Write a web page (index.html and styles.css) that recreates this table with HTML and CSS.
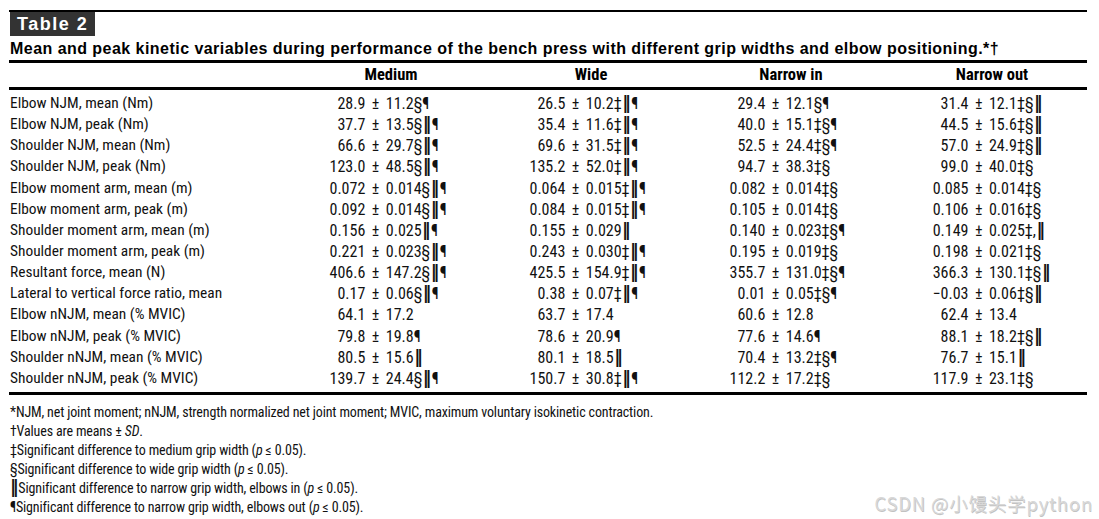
FILE: index.html
```html
<!DOCTYPE html>
<html lang="en">
<head>
<meta charset="utf-8">
<title>Table 2</title>
<link rel="stylesheet" href="styles.css">
</head>
<body>
<div class="page">
  <div class="top-rule"></div>
  <div class="tag-row"><span class="tag">Table 2</span></div>
  <div class="title">Mean and peak kinetic variables during performance of the bench press with different grip widths and elbow positioning.*†</div>
  <div class="table">
    <div class="row head">
      <div></div><div>Medium</div><div>Wide</div><div>Narrow in</div><div class="h4">Narrow out</div>
    </div>
    <div class="body">
      <div class="row"><div class="lbl">Elbow NJM, mean (Nm)</div><div><span class="m">28.9</span> ± 11.2§¶</div><div><span class="m">26.5</span> ± 10.2‡<span class="db">‖</span>¶</div><div><span class="m">29.4</span> ± 12.1§¶</div><div class="c4"><span class="m">31.4</span> ± 12.1‡§<span class="db">‖</span></div></div>
      <div class="row"><div class="lbl">Elbow NJM, peak (Nm)</div><div><span class="m">37.7</span> ± 13.5§<span class="db">‖</span>¶</div><div><span class="m">35.4</span> ± 11.6‡<span class="db">‖</span>¶</div><div><span class="m">40.0</span> ± 15.1‡§¶</div><div class="c4"><span class="m">44.5</span> ± 15.6‡§<span class="db">‖</span></div></div>
      <div class="row"><div class="lbl">Shoulder NJM, mean (Nm)</div><div><span class="m">66.6</span> ± 29.7§<span class="db">‖</span>¶</div><div><span class="m">69.6</span> ± 31.5‡<span class="db">‖</span>¶</div><div><span class="m">52.5</span> ± 24.4‡§¶</div><div class="c4"><span class="m">57.0</span> ± 24.9‡§<span class="db">‖</span></div></div>
      <div class="row"><div class="lbl">Shoulder NJM, peak (Nm)</div><div><span class="m">123.0</span> ± 48.5§<span class="db">‖</span>¶</div><div><span class="m">135.2</span> ± 52.0‡<span class="db">‖</span>¶</div><div><span class="m">94.7</span> ± 38.3‡§</div><div class="c4"><span class="m">99.0</span> ± 40.0‡§</div></div>
      <div class="row"><div class="lbl">Elbow moment arm, mean (m)</div><div><span class="m">0.072</span> ± 0.014§<span class="db">‖</span>¶</div><div><span class="m">0.064</span> ± 0.015‡<span class="db">‖</span>¶</div><div><span class="m">0.082</span> ± 0.014‡§</div><div class="c4"><span class="m">0.085</span> ± 0.014‡§</div></div>
      <div class="row"><div class="lbl">Elbow moment arm, peak (m)</div><div><span class="m">0.092</span> ± 0.014§<span class="db">‖</span>¶</div><div><span class="m">0.084</span> ± 0.015‡<span class="db">‖</span>¶</div><div><span class="m">0.105</span> ± 0.014‡§</div><div class="c4"><span class="m">0.106</span> ± 0.016‡§</div></div>
      <div class="row"><div class="lbl">Shoulder moment arm, mean (m)</div><div><span class="m">0.156</span> ± 0.025<span class="db">‖</span>¶</div><div><span class="m">0.155</span> ± 0.029<span class="db">‖</span></div><div><span class="m">0.140</span> ± 0.023‡§¶</div><div class="c4"><span class="m">0.149</span> ± 0.025‡,<span class="db">‖</span></div></div>
      <div class="row"><div class="lbl">Shoulder moment arm, peak (m)</div><div><span class="m">0.221</span> ± 0.023§<span class="db">‖</span>¶</div><div><span class="m">0.243</span> ± 0.030‡<span class="db">‖</span>¶</div><div><span class="m">0.195</span> ± 0.019‡§</div><div class="c4"><span class="m">0.198</span> ± 0.021‡§</div></div>
      <div class="row"><div class="lbl">Resultant force, mean (N)</div><div><span class="m">406.6</span> ± 147.2§<span class="db">‖</span>¶</div><div><span class="m">425.5</span> ± 154.9‡<span class="db">‖</span>¶</div><div><span class="m">355.7</span> ± 131.0‡§¶</div><div class="c4"><span class="m">366.3</span> ± 130.1‡§<span class="db">‖</span></div></div>
      <div class="row"><div class="lbl">Lateral to vertical force ratio, mean</div><div><span class="m">0.17</span> ± 0.06§<span class="db">‖</span>¶</div><div><span class="m">0.38</span> ± 0.07‡<span class="db">‖</span>¶</div><div><span class="m">0.01</span> ± 0.05‡§¶</div><div class="c4"><span class="m">−0.03</span> ± 0.06‡§<span class="db">‖</span></div></div>
      <div class="row"><div class="lbl">Elbow nNJM, mean (% MVIC)</div><div><span class="m">64.1</span> ± 17.2</div><div><span class="m">63.7</span> ± 17.4</div><div><span class="m">60.6</span> ± 12.8</div><div class="c4"><span class="m">62.4</span> ± 13.4</div></div>
      <div class="row"><div class="lbl">Elbow nNJM, peak (% MVIC)</div><div><span class="m">79.8</span> ± 19.8¶</div><div><span class="m">78.6</span> ± 20.9¶</div><div><span class="m">77.6</span> ± 14.6¶</div><div class="c4"><span class="m">88.1</span> ± 18.2‡§<span class="db">‖</span></div></div>
      <div class="row"><div class="lbl">Shoulder nNJM, mean (% MVIC)</div><div><span class="m">80.5</span> ± 15.6<span class="db">‖</span></div><div><span class="m">80.1</span> ± 18.5<span class="db">‖</span></div><div><span class="m">70.4</span> ± 13.2‡§¶</div><div class="c4"><span class="m">76.7</span> ± 15.1<span class="db">‖</span></div></div>
      <div class="row"><div class="lbl">Shoulder nNJM, peak (% MVIC)</div><div><span class="m">139.7</span> ± 24.4§<span class="db">‖</span>¶</div><div><span class="m">150.7</span> ± 30.8‡<span class="db">‖</span>¶</div><div><span class="m">112.2</span> ± 17.2‡§</div><div class="c4"><span class="m">117.9</span> ± 23.1‡§</div></div>
    </div>
  </div>
  <div class="notes">
    <p>*NJM, net joint moment; nNJM, strength normalized net joint moment; MVIC, maximum voluntary isokinetic contraction.</p>
    <p>†Values are means ± <i>SD</i>.</p>
    <p>‡Significant difference to medium grip width (<i>p</i> ≤ 0.05).</p>
    <p>§Significant difference to wide grip width (<i>p</i> ≤ 0.05).</p>
    <p><span class="db">‖</span>Significant difference to narrow grip width, elbows in (<i>p</i> ≤ 0.05).</p>
    <p>¶Significant difference to narrow grip width, elbows out (<i>p</i> ≤ 0.05).</p>
  </div>
</div>
<div class="watermark">CSDN @小馒头学python</div>
</body>
</html>
```

FILE: styles.css
```css
html, body {
  margin: 0;
  background: #ffffff;
}
body {
  color: #111111;
  font-family: "Liberation Sans", Arial, sans-serif;
  position: relative;
  width: 1099px;
  height: 519px;
  overflow: hidden;
}
.page {
  width: 1078px;
  padding: 10px 0 0 9px;
}
.top-rule {
  height: 2px;
  background: #000;
}
.tag-row {
  height: 24px;
  padding-left: 1px;
}
.tag {
  display: inline-block;
  vertical-align: top;
  height: 24px;
  line-height: 25px;
  padding: 0 7px 0 7px;
  background: #333333;
  color: #ffffff;
  font-weight: bold;
  font-size: 18px;
  letter-spacing: 1.5px;
}
.title {
  padding: 1px 0 0 1px;
  font-weight: bold;
  font-size: 16px;
  letter-spacing: 0.46px;
  line-height: 23px;
  color: #000;
  border-bottom: 3px solid #000;
  white-space: nowrap;
}
.table {
  font-family: "Roboto Condensed", "Liberation Sans", Arial, sans-serif;
  font-size: 16px;
}
.row {
  display: grid;
  grid-template-columns: 282px 200px 200px 200px 196px;
  white-space: nowrap;
}
.head {
  font-weight: bold;
  font-size: 16.5px;
  line-height: 24px;
  text-align: center;
  color: #000;
  border-bottom: 3px solid #000;
}
.head .h4 {
  padding-left: 6px;
}
.body {
  padding: 3px 0;
  border-bottom: 3px solid #000;
}
.body .row {
  height: 21.15px;
  line-height: 21.15px;
  word-spacing: 2.8px;
}
.body .lbl {
  padding-left: 1px;
  font-size: 15.4px;
  word-spacing: 0;
}
.m {
  display: inline-block;
  width: 74.3px;
  text-align: right;
}
.c4 .m {
  width: 77.5px;
}
.db {
  font-family: "DejaVu Sans", sans-serif;
  font-weight: bold;
  font-size: 17px;
  line-height: 1;
  word-spacing: 0;
  margin: 0 0.5px;
}
.notes {
  margin-top: 8px;
  padding-left: 1px;
  font-family: "Roboto Condensed", "Liberation Sans", Arial, sans-serif;
  font-size: 14px;
  letter-spacing: -0.15px;
  line-height: 18.9px;
}
.notes p {
  margin: 0;
  white-space: nowrap;
}
.notes .db {
  margin: 0;
}
.watermark {
  position: absolute;
  right: 6px;
  top: 491px;
  font-family: "Noto Sans CJK SC", "Liberation Sans", sans-serif;
  font-size: 18.5px;
  letter-spacing: 0.8px;
  line-height: 24px;
  color: #d8d8d8;
  text-shadow: 0.6px 0.6px 0 #c2c2c2;
}
```
